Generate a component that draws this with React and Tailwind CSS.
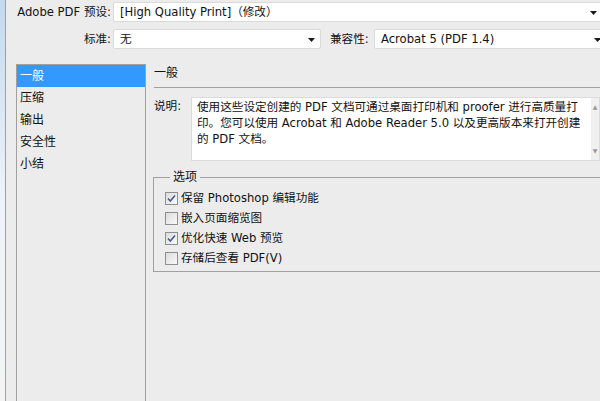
const FONT = { fontFamily: '"DejaVu Sans", "Noto Sans CJK SC", sans-serif' };

function Arrow({ className = "" }) {
  return (
    <svg width="7" height="4" viewBox="0 0 7 4" className={className}>
      <path d="M0 0h7L3.5 4z" fill="#1a1a1a" />
    </svg>
  );
}

function Select({ value, className = "", arrowRight = "right-[5px]" }) {
  return (
    <div className={`relative h-[20px] bg-white border border-[#dadada] rounded-[2px] flex items-center pl-[6px] ${className}`}>
      <span className="text-[#111] whitespace-nowrap">{value}</span>
      <Arrow className={`absolute top-[8px] ${arrowRight}`} />
    </div>
  );
}

function Check({ checked, label }) {
  return (
    <div className="h-[20px] flex items-center">
      <div className="w-[13px] h-[13px] border border-[#8e8f8f] bg-gradient-to-br from-[#dcdcdc] to-[#fafafa] flex items-center justify-center">
        {checked && (
          <svg width="9" height="9" viewBox="0 0 9 9">
            <path d="M1 4.5l2.3 2.5L8 1.5" stroke="#4a5c8c" strokeWidth="1.6" fill="none" />
          </svg>
        )}
      </div>
      <span className="ml-[3px] text-[#111] whitespace-nowrap">{label}</span>
    </div>
  );
}

const ITEMS = ["一般", "压缩", "输出", "安全性", "小结"];

const DESC = [
  "使用这些设定创建的 PDF 文档可通过桌面打印机和 proofer 进行高质量打",
  "印。您可以使用 Acrobat 和 Adobe Reader 5.0 以及更高版本来打开创建",
  "的 PDF 文档。",
];

export default function App() {
  return (
    <div className="w-[600px] h-[401px] bg-[#ececec] overflow-hidden flex text-[11.6px] leading-[16px]" style={FONT}>
      <div className="w-[5px] shrink-0 bg-gradient-to-b from-[#c4d9ee] via-[#eef3f8] to-[#f3f3f3]" />
      <div className="flex-1 border-l border-[#a0a0a0] flex flex-col min-w-0">
        {/* preset row */}
        <div className="mt-[2px] h-[20px] flex items-center">
          <div className="w-[106px] shrink-0 text-right pr-[1px] text-[#111] whitespace-nowrap">Adobe PDF 预设:</div>
          <Select value="[High Quality Print]（修改）" className="ml-[1px] w-[492px] shrink-0" arrowRight="right-[7px]" />
        </div>
        {/* standard row */}
        <div className="mt-[7px] h-[20px] flex items-center">
          <div className="w-[106px] shrink-0 text-right pr-[1px] text-[#111]">标准:</div>
          <Select value="无" className="ml-[1px] w-[208px] shrink-0" />
          <div className="ml-[9px] w-[44px] shrink-0 text-[#111] whitespace-nowrap">兼容性:</div>
          <Select value="Acrobat 5 (PDF 1.4)" className="w-[234px] shrink-0" arrowRight="right-[6px]" />
        </div>

        <div className="mt-[15px] flex flex-1 min-h-0">
          {/* category list */}
          <div className="ml-[10px] w-[130px] h-[345px] shrink-0 border border-[#a0a0a0] flex flex-col">
            {ITEMS.map((t, i) => (
              <div
                key={t}
                className={`h-[22px] shrink-0 flex items-center pl-[3px] text-[12px] ${
                  i === 0 ? "bg-[#3399ff] text-white" : "text-[#111]"
                }`}
              >
                {t}
              </div>
            ))}
          </div>

          {/* right panel */}
          <div className="ml-[8px] flex-1 min-w-0 flex flex-col">
            <div className="h-[24px] shrink-0 border-b border-[#a0a0a0] pt-[1px] text-[12px] text-[#111] w-[460px]">一般</div>
            <div className="mt-[9px] flex h-[64px] shrink-0">
              <div className="w-[37px] shrink-0 pt-[1px] text-[#111]">说明:</div>
              <div className="w-[409px] shrink-0 flex bg-white border border-[#dcdcdc]">
                <div className="flex-1 min-w-0 pl-[5px] pt-[1px] text-[#111] leading-[16px] whitespace-nowrap overflow-hidden">
                  {DESC.map((l) => (
                    <div key={l}>{l}</div>
                  ))}
                </div>
                <div className="w-[8px] shrink-0 bg-[#f0f0f0] flex flex-col items-center justify-between py-[6px]">
                  <span className="text-[6px] leading-[6px] text-[#999]">▲</span>
                  <span className="text-[6px] leading-[6px] text-[#999]">▼</span>
                </div>
              </div>
            </div>

            {/* options group */}
            <div className="relative mt-[16px] -ml-[1px] w-[460px] h-[95px] shrink-0 border border-[#a0a0a0] pt-[10px] pl-[11px]">
              <span className="absolute -top-[9px] left-[16px] px-[3px] bg-[#ececec] text-[12px] text-[#111]">选项</span>
              <Check checked label="保留 Photoshop 编辑功能" />
              <Check label="嵌入页面缩览图" />
              <Check checked label="优化快速 Web 预览" />
              <Check label="存储后查看 PDF(V)" />
            </div>
          </div>
        </div>
      </div>
    </div>
  );
}
